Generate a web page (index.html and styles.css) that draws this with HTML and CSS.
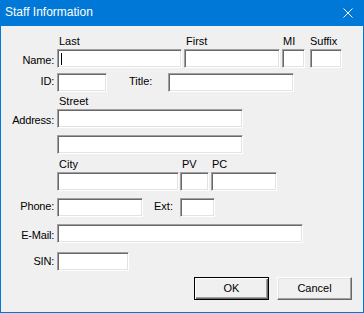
FILE: index.html
```html
<!DOCTYPE html>
<html>
<head>
<meta charset="utf-8">
<link rel="stylesheet" href="styles.css">
</head>
<body>
<div class="window">
  <div class="titlebar">
    <span class="title">Staff Information</span>
    <svg class="close" width="10" height="10" viewBox="0 0 10 10"><path d="M0.5 0.5L9.5 9.5M9.5 0.5L0.5 9.5" stroke="#fff" stroke-width="1" fill="none"/></svg>
  </div>
  <div class="content">
    <div class="row row-name">
      <div class="lbl mb1">Name:</div>
      <div class="part"><span class="cap">Last</span><div class="field w-last"><span class="caret"></span></div></div>
      <div class="part ml2"><span class="cap">First</span><div class="field w-first"></div></div>
      <div class="part ml2"><span class="cap cap-mi">MI</span><div class="field w-mi"></div></div>
      <div class="part ml5"><span class="cap cap-suffix">Suffix</span><div class="field w-suffix"></div></div>
    </div>
    <div class="row row-id">
      <div class="lbl mb4">ID:</div>
      <div class="field w-id"></div>
      <div class="lbl-inline lbl-title mb4">Title:</div>
      <div class="field w-title"></div>
    </div>
    <div class="row row-addr1">
      <div class="lbl mb1">Address:</div>
      <div class="part"><span class="cap">Street</span><div class="field w-addr"></div></div>
    </div>
    <div class="row row-addr2">
      <div class="lbl"></div>
      <div class="field w-addr"></div>
    </div>
    <div class="row row-city">
      <div class="lbl"></div>
      <div class="part"><span class="cap">City</span><div class="field w-city"></div></div>
      <div class="part ml1"><span class="cap">PV</span><div class="field w-pv"></div></div>
      <div class="part ml2"><span class="cap cap-pc">PC</span><div class="field w-pc"></div></div>
    </div>
    <div class="row row-phone">
      <div class="lbl mb4">Phone:</div>
      <div class="field w-phone"></div>
      <div class="lbl-inline lbl-ext mb4">Ext:</div>
      <div class="field w-ext"></div>
    </div>
    <div class="row row-email">
      <div class="lbl mb1">E-Mail:</div>
      <div class="field w-email"></div>
    </div>
    <div class="row row-sin">
      <div class="lbl mb3">SIN:</div>
      <div class="field w-sin"></div>
    </div>
    <div class="buttons">
      <button class="btn btn-default">OK</button>
      <button class="btn">Cancel</button>
    </div>
  </div>
</div>
</body>
</html>
```
FILE: styles.css
```css
html, body {
  margin: 0;
  padding: 0;
  background: #f0f0f0;
}
.window {
  width: 364px;
  height: 313px;
  box-sizing: border-box;
  border: 1px solid #0078d7;
  background: #f0f0f0;
  font-family: "Liberation Sans", Arial, sans-serif;
  font-size: 11px;
  color: #000;
}
.titlebar {
  height: 25px;
  background: #0078d7;
  display: flex;
  justify-content: space-between;
  align-items: flex-start;
}
.title {
  color: #fff;
  font-size: 12px;
  line-height: 23px;
  padding-left: 4px;
}
.close {
  display: block;
  margin-top: 7px;
  margin-right: 10px;
}
.content {
  padding-top: 9px;
}
.row {
  display: flex;
  align-items: flex-end;
}
.lbl {
  width: 53px;
  margin-right: 3px;
  text-align: right;
  line-height: 13px;
  letter-spacing: -0.2px;
  white-space: nowrap;
  flex: none;
}
.lbl-inline {
  line-height: 13px;
  white-space: nowrap;
}
.lbl-title { margin-left: 22px; margin-right: 16px; }
.lbl-ext { margin-left: 11px; margin-right: 7px; }
.mb1 { margin-bottom: 1px; }
.mb3 { margin-bottom: 3px; }
.mb4 { margin-bottom: 4px; }
.part {
  display: flex;
  flex-direction: column;
}
.ml1 { margin-left: 1px; }
.ml2 { margin-left: 2px; }
.ml5 { margin-left: 5px; }
.cap {
  line-height: 13px;
  margin-bottom: 1px;
  padding-left: 2px;
  white-space: nowrap;
}
.cap-mi { padding-left: 1px; }
.cap-suffix { padding-left: 0; }
.cap-pc { padding-left: 1px; }
.field {
  height: 19px;
  box-sizing: border-box;
  background: #fff;
  border: 1px solid;
  border-color: #a0a0a0 #ffffff #ffffff #a0a0a0;
  box-shadow: inset 1px 1px 0 #696969, inset -1px -1px 0 #e3e3e3;
  flex: none;
}
.caret {
  display: block;
  width: 1px;
  height: 12px;
  margin: 3px 0 0 3px;
  background: #000;
}
.w-last { width: 125px; }
.w-first { width: 96px; }
.w-mi { width: 23px; }
.w-suffix { width: 32px; }
.w-id { width: 50px; }
.w-title { width: 126px; }
.w-addr { width: 186px; }
.w-city { width: 122px; }
.w-pv { width: 29px; }
.w-pc { width: 66px; }
.w-phone { width: 86px; }
.w-ext { width: 35px; }
.w-email { width: 246px; }
.w-sin { width: 72px; }
.row-id { margin-top: 5px; }
.row-addr1 { margin-top: 3px; }
.row-addr2 { margin-top: 7px; }
.row-city { margin-top: 4px; }
.row-phone { margin-top: 7px; }
.row-email { margin-top: 7px; }
.row-sin { margin-top: 9px; }
.buttons {
  margin-top: 6px;
  display: flex;
  justify-content: flex-end;
  gap: 8px;
  padding-right: 11px;
}
.btn {
  width: 75px;
  height: 23px;
  box-sizing: border-box;
  margin: 0;
  padding: 0;
  font-family: "Liberation Sans", Arial, sans-serif;
  font-size: 11px;
  color: #000;
  background: #f0f0f0;
  border: 1px solid;
  border-color: #ffffff #696969 #696969 #ffffff;
  box-shadow: inset -1px -1px 0 #a0a0a0, inset 1px 1px 0 #e3e3e3;
  line-height: 19px;
  text-align: center;
}
.btn-default {
  border-color: #000;
  box-shadow: inset 1px 1px 0 #ffffff, inset -1px -1px 0 #696969, inset -2px -2px 0 #a0a0a0;
}
```
